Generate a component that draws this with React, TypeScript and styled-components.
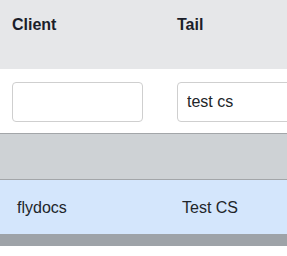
import React, { useState } from 'react';
import styled, { createGlobalStyle } from 'styled-components';

const GlobalStyle = createGlobalStyle`
    body {
        margin: 0;
        background: #ffffff;
        font-family: "Liberation Sans", Arial, sans-serif;
        color: #212529;
    }
`;

const Table = styled.div`
    width: 100%;
    overflow: hidden;
    display: flex;
    flex-direction: column;
`;

const Row = styled.div`
    display: grid;
    grid-template-columns: 165px 1fr;
`;

const HeaderRow = styled(Row)`
    height: 69px;
    background: #e6e7e9;
`;

const HeaderCell = styled.div`
    padding: 16px 12px 0;
    font-size: 16px;
    font-weight: bold;
    line-height: 18px;
    color: #1b1e2a;
`;

const FilterRow = styled(Row)`
    height: 65px;
    border-bottom: 1px solid #a3a6a9;
    box-sizing: border-box;
    align-items: start;
`;

const FilterCell = styled.div`
    padding: 13px 12px 0;
    min-width: 0;
`;

const FilterInput = styled.input`
    box-sizing: border-box;
    width: 131px;
    height: 40px;
    padding: 0 9px;
    border: 1px solid #cfcfcf;
    border-radius: 4px;
    font-family: "Liberation Sans", Arial, sans-serif;
    font-size: 16px;
    color: #212529;
    outline: none;
`;

const GroupBand = styled.div`
    height: 45px;
    background: #ced2d5;
    border-bottom: 1px solid #a3a6a9;
`;

const DataRow = styled(Row)<{ $selected?: boolean }>`
    height: 54px;
    align-items: center;
    background: ${(props) => (props.$selected ? '#d4e6fc' : '#ffffff')};
`;

const DataCell = styled.div`
    padding: 1px 17px 0;
    font-size: 16px;
    color: #212529;
    white-space: nowrap;
`;

const FooterBand = styled.div`
    height: 12px;
    background: #9ea3a8;
`;

const rows = [{ client: 'flydocs', tail: 'Test CS' }];

const App = () => {
    const [client, setClient] = useState('');
    const [tail, setTail] = useState('test cs');

    return (
        <>
            <GlobalStyle />
            <Table>
                <HeaderRow>
                    <HeaderCell>Client</HeaderCell>
                    <HeaderCell>Tail</HeaderCell>
                </HeaderRow>
                <FilterRow>
                    <FilterCell>
                        <FilterInput value={client} onChange={(e) => setClient(e.target.value)} />
                    </FilterCell>
                    <FilterCell>
                        <FilterInput value={tail} onChange={(e) => setTail(e.target.value)} />
                    </FilterCell>
                </FilterRow>
                <GroupBand />
                {rows.map((row) => (
                    <DataRow key={row.client} $selected>
                        <DataCell>{row.client}</DataCell>
                        <DataCell>{row.tail}</DataCell>
                    </DataRow>
                ))}
                <FooterBand />
            </Table>
        </>
    );
};

export default App;
